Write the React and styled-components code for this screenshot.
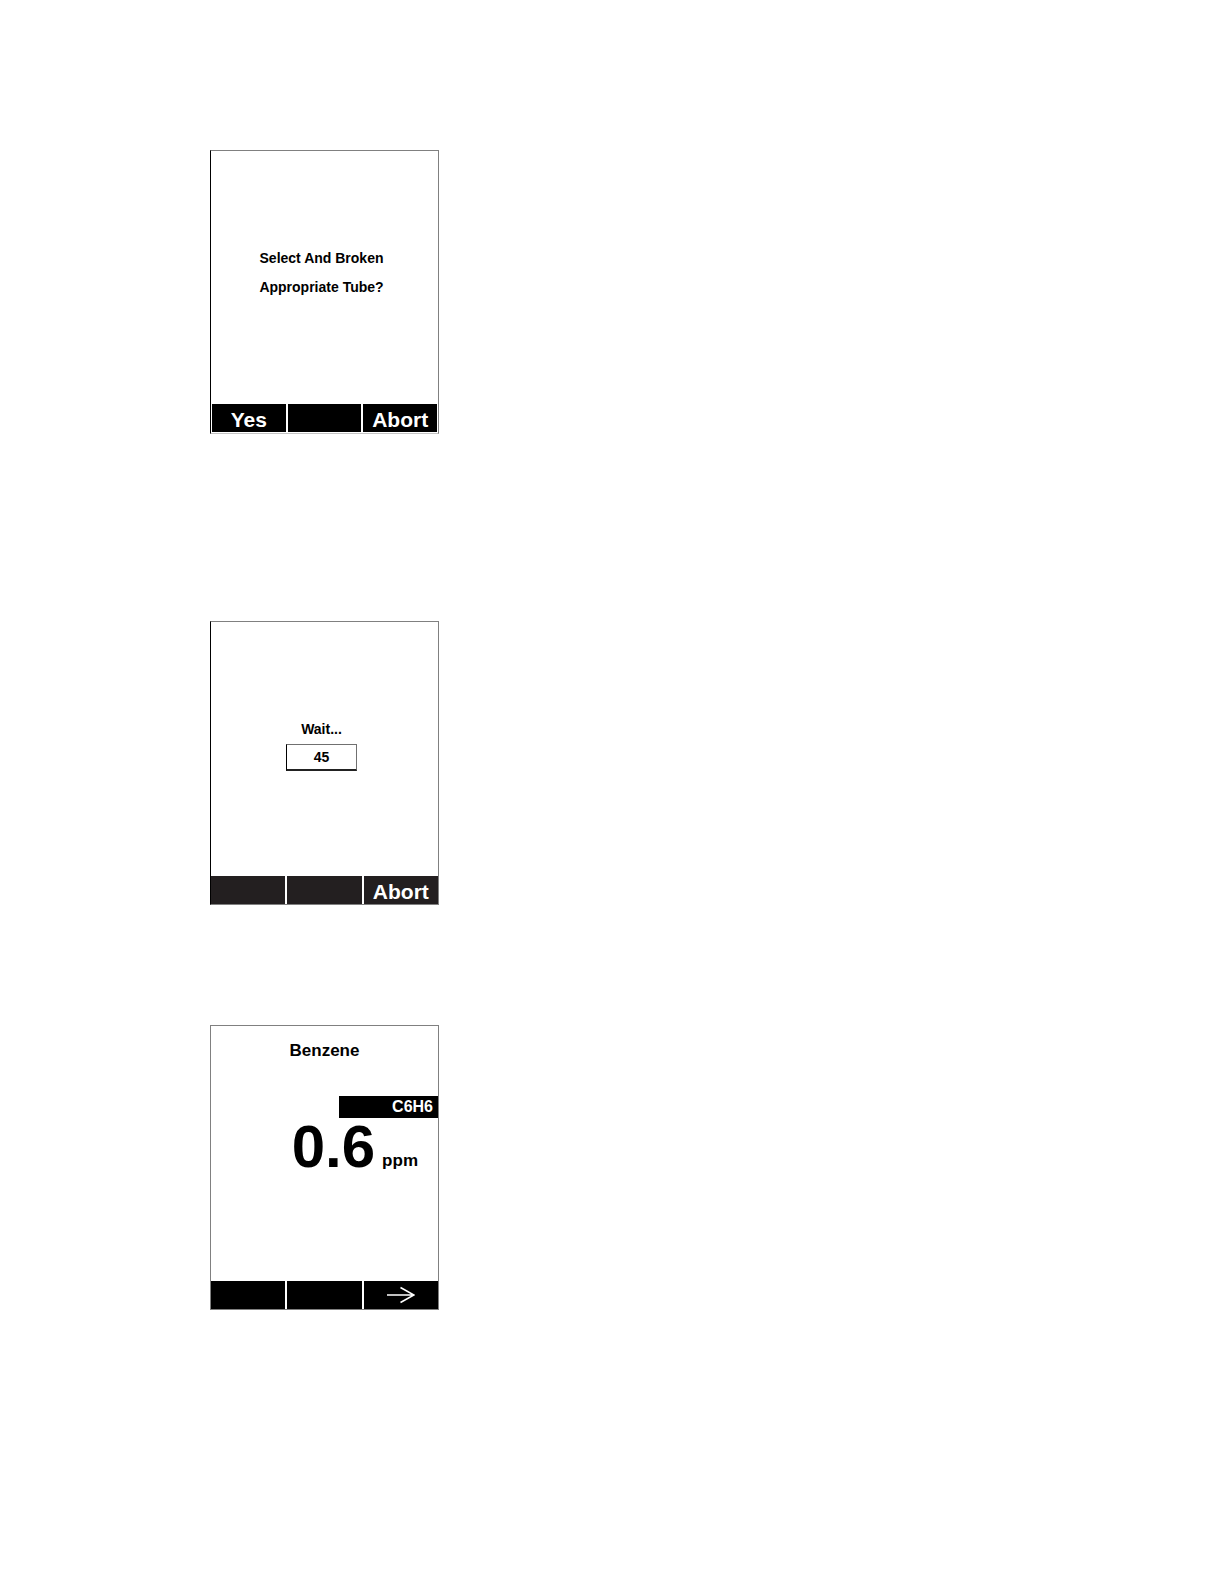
import React from "react";
import styled, { createGlobalStyle } from "styled-components";

const GlobalStyle = createGlobalStyle`
  * {
    box-sizing: border-box;
  }
  body {
    margin: 0;
    background: #fff;
    color: #000;
    font-family: "Liberation Sans", Arial, sans-serif;
    font-weight: bold;
  }
`;

const Page = styled.main`
  display: flex;
  flex-direction: column;
  align-items: flex-start;
  min-height: 100vh;
  padding: 150px 210px;
`;

const Screen = styled.section`
  display: flex;
  flex-direction: column;
  width: 229px;
  min-height: ${(p) => p.$height || 284}px;
  margin-bottom: ${(p) => p.$gap || 0}px;
  border: 1px solid #808080;
  border-left-color: ${(p) => p.$edge || "#000"};
  border-bottom-color: ${(p) => p.$base || "#808080"};
`;

const Body = styled.div`
  flex: 1;
  display: flex;
  flex-direction: column;
  align-items: center;
  padding-top: ${(p) => p.$top}px;
`;

const Message = styled.p`
  margin: 0;
  padding-right: 6px;
  font-size: 14px;
  line-height: 29px;
  text-align: center;
`;

const Countdown = styled.output`
  display: block;
  width: 71px;
  margin-right: 6px;
  border: 1px solid #707070;
  border-left-color: #000;
  border-bottom: 2px solid #222;
  font-size: 14px;
  line-height: 24px;
  text-align: center;
`;

const SoftKeys = styled.nav`
  display: grid;
  grid-template-columns: repeat(3, 1fr);
  gap: 2px;
  padding: ${(p) => p.$inset || "0"};
`;

const SoftKey = styled.button`
  display: flex;
  align-items: center;
  justify-content: center;
  height: 28px;
  padding: ${(p) => (p.$icon ? "0" : "4px 0 0")};
  border: 0;
  border-radius: 0;
  background: ${(p) => p.$tone || "#000"};
  color: #fff;
  font: bold 21px/24px "Liberation Sans", Arial, sans-serif;
`;

const GasName = styled.h1`
  margin: 0 0 33px;
  font-size: 17px;
  line-height: 24px;
`;

const Formula = styled.div`
  align-self: flex-end;
  width: 99px;
  padding-right: 5px;
  background: #000;
  color: #fff;
  font-size: 16px;
  line-height: 22px;
  text-align: right;
`;

const Reading = styled.div`
  align-self: flex-end;
  display: flex;
  align-items: flex-end;
  gap: 7px;
  padding-right: 20px;
`;

const Value = styled.span`
  font-size: 60px;
  line-height: 58px;
`;

const Unit = styled.span`
  font-size: 17px;
  line-height: 30px;
`;

function Arrow() {
  return (
    <svg width="28" height="18" viewBox="0 0 28 18" fill="none" stroke="#fff" strokeWidth="1.6" aria-hidden="true">
      <path d="M0 9H27M13.500 1.500L27 9L13.500 16.500" />
    </svg>
  );
}

export default function App() {
  return (
    <>
      <GlobalStyle />
      <Page>
        <Screen $gap={187} $base="#c4c4c4">
          <Body $top={93}>
            <Message>
              Select And Broken
              <br />
              Appropriate Tube?
            </Message>
          </Body>
          <SoftKeys $inset="0 1px 1px">
            <SoftKey type="button">Yes</SoftKey>
            <SoftKey type="button" aria-label="Blank key" />
            <SoftKey type="button">Abort</SoftKey>
          </SoftKeys>
        </Screen>

        <Screen $gap={120}>
          <Body $top={93}>
            <Message>Wait...</Message>
            <Countdown>45</Countdown>
          </Body>
          <SoftKeys>
            <SoftKey type="button" $tone="#231f20" aria-label="Left key" />
            <SoftKey type="button" $tone="#231f20" aria-label="Middle key" />
            <SoftKey type="button" $tone="#231f20">Abort</SoftKey>
          </SoftKeys>
        </Screen>

        <Screen $height={285} $edge="#808080">
          <Body $top={13}>
            <GasName>Benzene</GasName>
            <Formula>C6H6</Formula>
            <Reading>
              <Value>0.6</Value>
              <Unit>ppm</Unit>
            </Reading>
          </Body>
          <SoftKeys>
            <SoftKey type="button" aria-label="Left key" />
            <SoftKey type="button" aria-label="Middle key" />
            <SoftKey type="button" $icon aria-label="Next">
              <Arrow />
            </SoftKey>
          </SoftKeys>
        </Screen>
      </Page>
    </>
  );
}
